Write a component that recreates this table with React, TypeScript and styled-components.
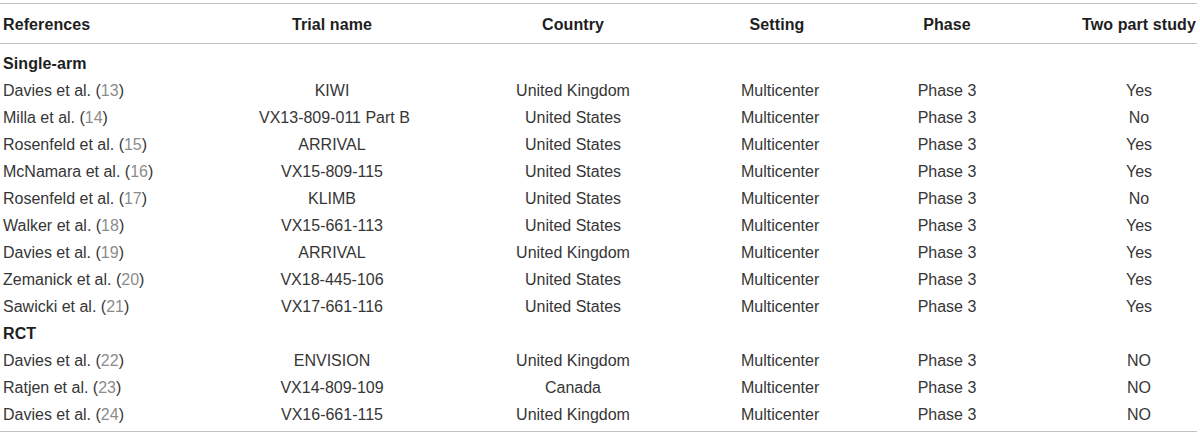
import React from "react";
import styled, { createGlobalStyle } from "styled-components";

const Global = createGlobalStyle`
  html, body { margin: 0; padding: 0; background: #fff; }
  body { font-family: "Liberation Sans", Arial, Helvetica, sans-serif; }
`;

const COLS = "259px 146px 336px 72px 268px 116px";

const Wrap = styled.div`
  width: 1197px;
  padding-top: 3px;
`;

const HeaderRow = styled.div`
  display: grid;
  grid-template-columns: ${COLS};
  height: 41px;
  padding-top: 2px;
  align-items: center;
  border-top: 1px solid #c2c2c2;
  border-bottom: 1px solid #c2c2c2;
  box-sizing: border-box;
`;

const HeadCell = styled.div<{ $left?: boolean }>`
  font-size: 16px;
  font-weight: 700;
  color: #1e1e1e;
  letter-spacing: 0.1px;
  white-space: nowrap;
  text-align: ${(p) => (p.$left ? "left" : "center")};
  padding-left: ${(p) => (p.$left ? "3px" : "0")};
`;

const Body = styled.div`
  padding: 6px 0 3px;
  border-bottom: 1px solid #c2c2c2;
`;

const Row = styled.div`
  display: grid;
  grid-template-columns: ${COLS};
  height: 27px;
  align-items: center;
`;

const SectionTitle = styled.div`
  grid-column: 1 / -1;
  font-size: 16px;
  font-weight: 700;
  color: #1e1e1e;
  letter-spacing: 0.1px;
  padding-left: 3px;
`;

const Cell = styled.div<{ $left?: boolean }>`
  font-size: 16px;
  color: #363636;
  white-space: nowrap;
  text-align: ${(p) => (p.$left ? "left" : "center")};
  padding-left: ${(p) => (p.$left ? "3px" : "0")};
`;

const Cite = styled.span`
  color: #8c8c8c;
`;

type Rec = [string, string, string, string, string, string, string];

const single: Rec[] = [
  ["Davies et al.", "13", "KIWI", "United Kingdom", "Multicenter", "Phase 3", "Yes"],
  ["Milla et al.", "14", "VX13-809-011 Part B", "United States", "Multicenter", "Phase 3", "No"],
  ["Rosenfeld et al.", "15", "ARRIVAL", "United States", "Multicenter", "Phase 3", "Yes"],
  ["McNamara et al.", "16", "VX15-809-115", "United States", "Multicenter", "Phase 3", "Yes"],
  ["Rosenfeld et al.", "17", "KLIMB", "United States", "Multicenter", "Phase 3", "No"],
  ["Walker et al.", "18", "VX15-661-113", "United States", "Multicenter", "Phase 3", "Yes"],
  ["Davies et al.", "19", "ARRIVAL", "United Kingdom", "Multicenter", "Phase 3", "Yes"],
  ["Zemanick et al.", "20", "VX18-445-106", "United States", "Multicenter", "Phase 3", "Yes"],
  ["Sawicki et al.", "21", "VX17-661-116", "United States", "Multicenter", "Phase 3", "Yes"],
];

const rct: Rec[] = [
  ["Davies et al.", "22", "ENVISION", "United Kingdom", "Multicenter", "Phase 3", "NO"],
  ["Ratjen et al.", "23", "VX14-809-109", "Canada", "Multicenter", "Phase 3", "NO"],
  ["Davies et al.", "24", "VX16-661-115", "United Kingdom", "Multicenter", "Phase 3", "NO"],
];

const DataRow = ({ r }: { r: Rec }) => (
  <Row>
    <Cell $left>
      {r[0]} (<Cite>{r[1]}</Cite>)
    </Cell>
    <Cell>{r[2]}</Cell>
    <Cell>{r[3]}</Cell>
    <Cell>{r[4]}</Cell>
    <Cell>{r[5]}</Cell>
    <Cell>{r[6]}</Cell>
  </Row>
);

export default function App() {
  return (
    <>
      <Global />
      <Wrap>
        <HeaderRow>
          <HeadCell $left>References</HeadCell>
          <HeadCell>Trial name</HeadCell>
          <HeadCell>Country</HeadCell>
          <HeadCell>Setting</HeadCell>
          <HeadCell>Phase</HeadCell>
          <HeadCell>Two part study</HeadCell>
        </HeaderRow>
        <Body>
          <Row>
            <SectionTitle>Single-arm</SectionTitle>
          </Row>
          {single.map((r, i) => (
            <DataRow key={"s" + i} r={r} />
          ))}
          <Row>
            <SectionTitle>RCT</SectionTitle>
          </Row>
          {rct.map((r, i) => (
            <DataRow key={"r" + i} r={r} />
          ))}
        </Body>
      </Wrap>
    </>
  );
}
